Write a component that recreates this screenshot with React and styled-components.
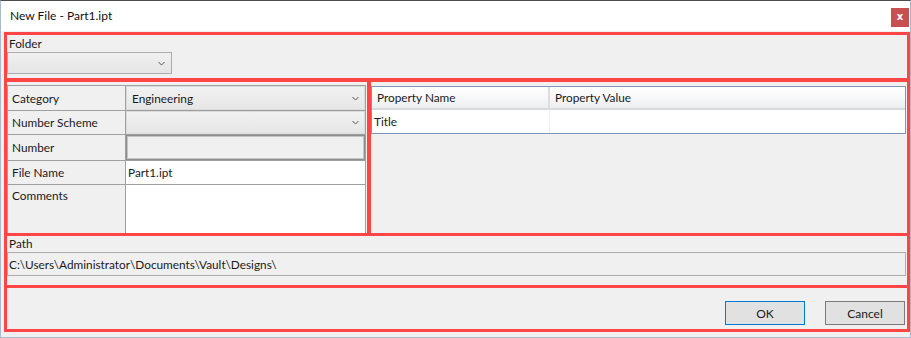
import styled, { createGlobalStyle } from "styled-components";

const GlobalStyle = createGlobalStyle`
  html, body {
    margin: 0;
    padding: 0;
    background: #f0f0f0;
  }
  body {
    font-family: Lato, "Noto Sans", sans-serif;
    font-size: 11.8px;
    color: #1a1a1a;
  }
`;

const RED = "#ff4545";

function Chevron() {
  return (
    <svg width="7" height="5" viewBox="0 0 7 5">
      <polyline points="0.5,1 3.5,4 6.5,1" fill="none" stroke="#555" strokeWidth="1" />
    </svg>
  );
}

function App() {
  return (
    <>
      <GlobalStyle />
      <Window>
        <TitleBar>
          <Title>New File - Part1.ipt</Title>
          <CloseButton>x</CloseButton>
        </TitleBar>
        <Spacer />

        <FolderBox>
          <FieldLabel>Folder</FieldLabel>
          <FolderCombo>
            <Chevron />
          </FolderCombo>
        </FolderBox>

        <Middle>
          <LeftBox>
            <Grid>
              <LabelCell>Category</LabelCell>
              <ComboCell>
                <span>Engineering</span>
                <Chevron />
              </ComboCell>

              <LabelCell>Number Scheme</LabelCell>
              <ComboCell>
                <span />
                <Chevron />
              </ComboCell>

              <LabelCell>Number</LabelCell>
              <ValueCell>
                <DisabledInput />
              </ValueCell>

              <LabelCell>File Name</LabelCell>
              <ValueCell $white>Part1.ipt</ValueCell>

              <LabelCell $top $last>Comments</LabelCell>
              <ValueCell $white $last />
            </Grid>
          </LeftBox>

          <RightBox>
            <PropTable>
              <HeaderCell $first>Property Name</HeaderCell>
              <HeaderCell>Property Value</HeaderCell>
              <BodyCell $first>Title</BodyCell>
              <BodyCell />
            </PropTable>
          </RightBox>
        </Middle>

        <PathBox>
          <FieldLabel>Path</FieldLabel>
          <PathField>C:\Users\Administrator\Documents\Vault\Designs\</PathField>
        </PathBox>

        <ButtonBox>
          <DialogButton $default>OK</DialogButton>
          <DialogButton>Cancel</DialogButton>
        </ButtonBox>
      </Window>
    </>
  );
}

const Window = styled.div`
  width: 911px;
  height: 338px;
  box-sizing: border-box;
  display: flex;
  flex-direction: column;
  background: #f0f0f0;
  border: 1px solid #a9bacd;
  border-top-color: #4d4d4d;
  padding-left: 3px;
`;

const TitleBar = styled.div`
  height: 30px;
  margin-left: -3px;
  padding: 0 1px 0 9px;
  background: #ffffff;
  display: flex;
  align-items: flex-start;
  justify-content: space-between;
  flex-shrink: 0;
`;

const Title = styled.div`
  margin-top: 7px;
  line-height: 16px;
  font-size: 12px;
  color: #111;
`;

const CloseButton = styled.div`
  margin-top: 7px;
  width: 18px;
  height: 19px;
  background: #c75050;
  color: #fff;
  font-family: "DejaVu Sans", sans-serif;
  font-weight: bold;
  font-size: 10px;
  line-height: 17px;
  text-align: center;
`;

const Spacer = styled.div`
  height: 1px;
  flex-shrink: 0;
`;

const RedBox = styled.div`
  box-sizing: border-box;
  border: 3px solid ${RED};
  flex-shrink: 0;
`;

const FolderBox = styled(RedBox)`
  height: 49px;
  padding-top: 1px;
`;

const FieldLabel = styled.div`
  height: 16px;
  line-height: 15px;
  padding-left: 2px;
`;

const FolderCombo = styled.div`
  width: 165px;
  height: 22px;
  box-sizing: border-box;
  border: 1px solid #acacac;
  background: linear-gradient(#f0f0f0, #e5e5e5);
  display: flex;
  align-items: center;
  justify-content: flex-end;
  padding-right: 6px;
`;

const Middle = styled.div`
  display: flex;
  height: 157px;
  margin-top: -2px;
  flex-shrink: 0;
`;

const LeftBox = styled(RedBox)`
  width: 366px;
  padding: 3px 1px 0 0;
  display: flex;
  flex-direction: column;
`;

const Grid = styled.div`
  flex: 1;
  display: grid;
  grid-template-columns: 118px 1fr;
  grid-template-rows: 25px 24px 26px 24px 1fr;
  border: 1px solid #a0a0a0;
  border-bottom: none;
`;

const LabelCell = styled.div`
  box-sizing: border-box;
  display: flex;
  align-items: ${(p) => (p.$top ? "flex-start" : "center")};
  padding: ${(p) => (p.$top ? "3px 0 0 4px" : "0 0 0 4px")};
  border-right: 1px solid #a0a0a0;
  border-bottom: ${(p) => (p.$last ? "none" : "1px solid #a0a0a0")};
  background: #f0f0f0;
`;

const ValueCell = styled.div`
  box-sizing: border-box;
  display: flex;
  align-items: center;
  padding-left: 2px;
  border-bottom: ${(p) => (p.$last ? "none" : "1px solid #a0a0a0")};
  background: ${(p) => (p.$white ? "#ffffff" : "#f0f0f0")};
`;

const ComboCell = styled.div`
  box-sizing: border-box;
  display: flex;
  align-items: center;
  justify-content: space-between;
  padding: 0 6px 0 6px;
  border-bottom: 1px solid #a0a0a0;
  background: linear-gradient(#f2f2f2, #e6e6e6);
  box-shadow: inset 0 0 0 1px #dadada;
`;

const DisabledInput = styled.div`
  margin-left: -2px;
  flex: 1;
  align-self: stretch;
  border: 1px solid #8e8e8e;
  box-shadow: inset 0 0 0 1px #c4c4c4;
  background: #f0f0f0;
`;

const RightBox = styled(RedBox)`
  flex: 1;
  margin-left: -2px;
  padding: 4px 1px 0 0;
`;

const PropTable = styled.div`
  display: grid;
  grid-template-columns: 178px 1fr;
  grid-template-rows: 23px 23px;
  border: 1px solid #7a96b9;
  background: #ffffff;
`;

const HeaderCell = styled.div`
  box-sizing: border-box;
  display: flex;
  align-items: center;
  padding-left: 5px;
  background: linear-gradient(#ffffff, #f6f7f8 55%, #eceef0);
  border-bottom: 2px solid #d9dadb;
  border-right: ${(p) => (p.$first ? "2px solid #dddddd" : "none")};
`;

const BodyCell = styled.div`
  box-sizing: border-box;
  display: flex;
  align-items: center;
  padding-left: 2px;
  border-right: ${(p) => (p.$first ? "1px solid #f0f0f0" : "none")};
`;

const PathBox = styled(RedBox)`
  height: 55px;
  margin-top: -3px;
  padding: 0 1px 0 0;
`;

const PathField = styled.div`
  height: 24px;
  box-sizing: border-box;
  border: 1px solid #adadad;
  background: #f0f0f0;
  display: flex;
  align-items: center;
  padding-left: 1px;
`;

const ButtonBox = styled(RedBox)`
  height: 47px;
  margin-top: -3px;
  display: flex;
  align-items: flex-end;
  justify-content: flex-end;
  gap: 20px;
  padding: 0 2px 4px 0;
`;

const DialogButton = styled.div`
  width: 80px;
  height: 24px;
  box-sizing: border-box;
  display: flex;
  align-items: center;
  justify-content: center;
  background: #e1e1e1;
  border: 1px solid ${(p) => (p.$default ? "#0078d7" : "#7a7a7a")};
  font-size: 12px;
`;

export default App;
